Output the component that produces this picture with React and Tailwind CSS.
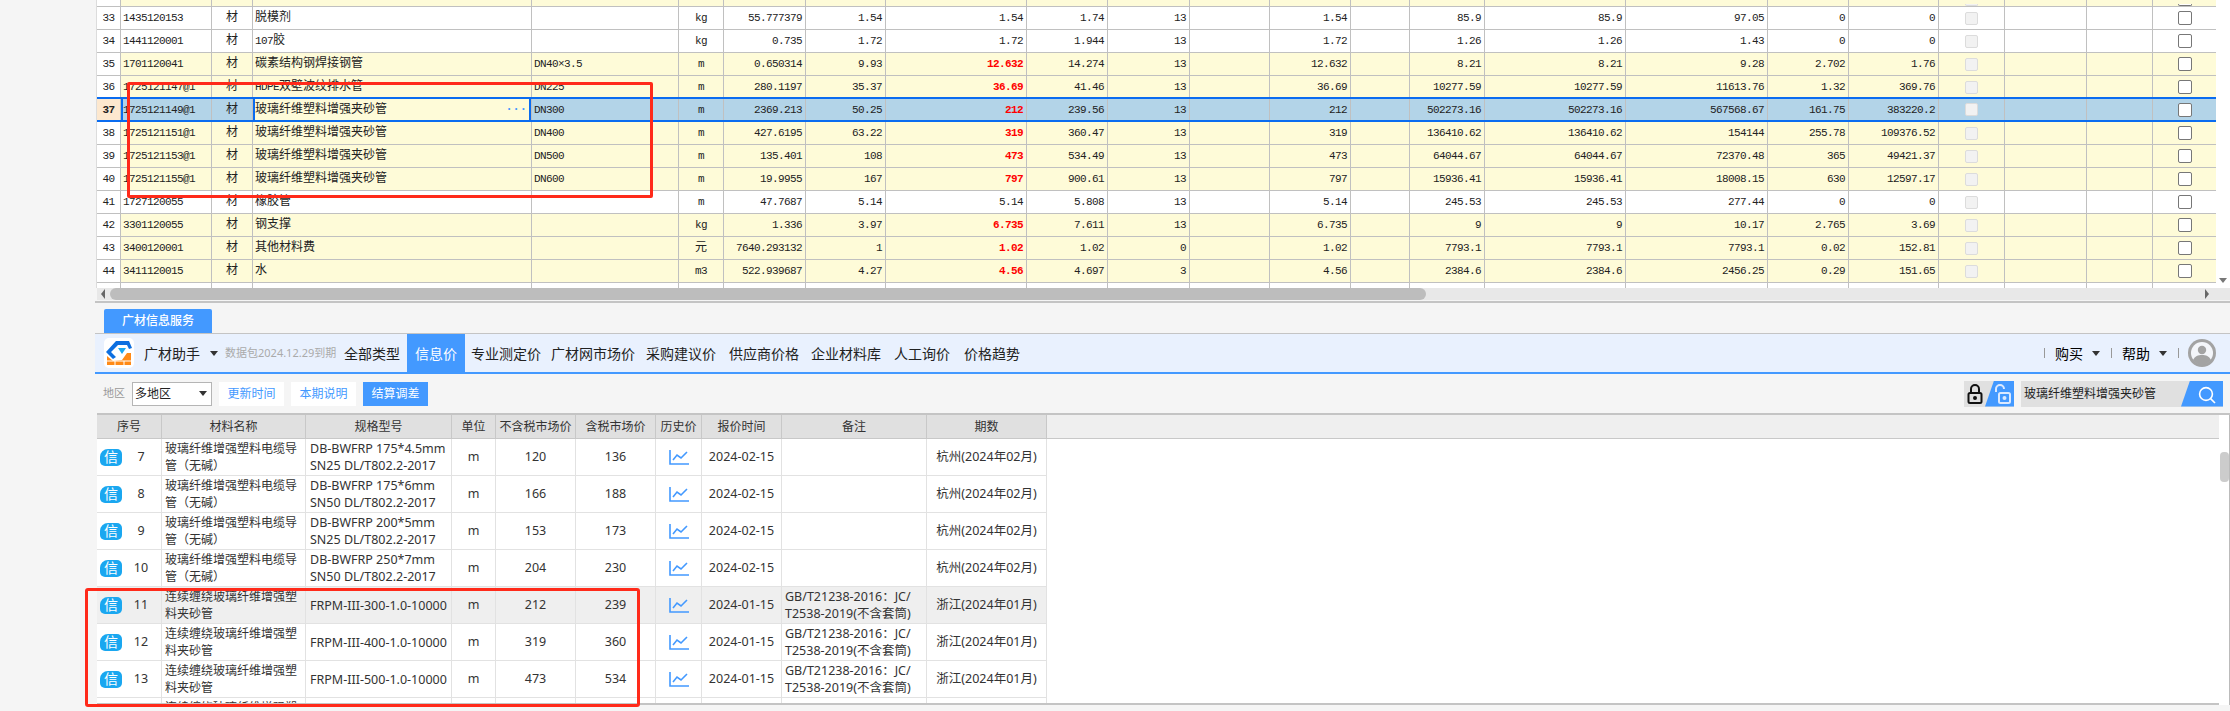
import React from "react";

const gridCols =
  "grid grid-cols-[24px_91px_41px_279px_147px_45px_82px_80px_141px_81px_82px_80px_81px_59px_75px_141px_142px_81px_90px_66px_82px_66px_63px]";

const tableCols =
  "grid grid-cols-[65px_144px_146px_44px_80px_80px_46px_80px_145px_120px]";

const materials = [
  ["33", "1435120153", "脱模剂", "", "kg", "55.777379", "1.54", "1.54", "1.74", "13", "1.54", "85.9", "85.9", "97.05", "0", "0", "w"],
  ["34", "1441120001", "107胶", "", "kg", "0.735", "1.72", "1.72", "1.944", "13", "1.72", "1.26", "1.26", "1.43", "0", "0", "w"],
  ["35", "1701120041", "碳素结构钢焊接钢管", "DN40×3.5", "m", "0.650314", "9.93", "12.632", "14.274", "13", "12.632", "8.21", "8.21", "9.28", "2.702", "1.76", "r"],
  ["36", "1725121147@1", "HDPE双壁波纹排水管", "DN225", "m", "280.1197", "35.37", "36.69", "41.46", "13", "36.69", "10277.59", "10277.59", "11613.76", "1.32", "369.76", "r"],
  ["37", "1725121149@1", "玻璃纤维塑料增强夹砂管", "DN300", "m", "2369.213", "50.25", "212", "239.56", "13", "212", "502273.16", "502273.16", "567568.67", "161.75", "383220.2", "s"],
  ["38", "1725121151@1", "玻璃纤维塑料增强夹砂管", "DN400", "m", "427.6195", "63.22", "319", "360.47", "13", "319", "136410.62", "136410.62", "154144", "255.78", "109376.52", "r"],
  ["39", "1725121153@1", "玻璃纤维塑料增强夹砂管", "DN500", "m", "135.401", "108", "473", "534.49", "13", "473", "64044.67", "64044.67", "72370.48", "365", "49421.37", "r"],
  ["40", "1725121155@1", "玻璃纤维塑料增强夹砂管", "DN600", "m", "19.9955", "167", "797", "900.61", "13", "797", "15936.41", "15936.41", "18008.15", "630", "12597.17", "r"],
  ["41", "1727120055", "橡胶管", "", "m", "47.7687", "5.14", "5.14", "5.808", "13", "5.14", "245.53", "245.53", "277.44", "0", "0", "w"],
  ["42", "3301120055", "钢支撑", "", "kg", "1.336", "3.97", "6.735", "7.611", "13", "6.735", "9", "9", "10.17", "2.765", "3.69", "r"],
  ["43", "3400120001", "其他材料费", "", "元", "7640.293132", "1", "1.02", "1.02", "0", "1.02", "7793.1", "7793.1", "7793.1", "0.02", "152.81", "r"],
  ["44", "3411120015", "水", "", "m3", "522.939687", "4.27", "4.56", "4.697", "3", "4.56", "2384.6", "2384.6", "2456.25", "0.29", "151.65", "r"],
];

const glass = "玻璃纤维增强塑料电缆导管（无碱）";
const frpm = "连续缠绕玻璃纤维增强塑料夹砂管";
const hangzhou = "杭州(2024年02月)";
const zhejiang = "浙江(2024年01月)";
const standard = ["GB/T21238-2016：JC/", "T2538-2019(不含套筒)"];

const prices = [
  [7, glass, ["DB-BWFRP 175*4.5mm", "SN25 DL/T802.2-2017"], "120", "136", "2024-02-15", null, hangzhou],
  [8, glass, ["DB-BWFRP 175*6mm", "SN50 DL/T802.2-2017"], "166", "188", "2024-02-15", null, hangzhou],
  [9, glass, ["DB-BWFRP 200*5mm", "SN25 DL/T802.2-2017"], "153", "173", "2024-02-15", null, hangzhou],
  [10, glass, ["DB-BWFRP 250*7mm", "SN50 DL/T802.2-2017"], "204", "230", "2024-02-15", null, hangzhou],
  [11, frpm, ["FRPM-III-300-1.0-10000"], "212", "239", "2024-01-15", standard, zhejiang],
  [12, frpm, ["FRPM-III-400-1.0-10000"], "319", "360", "2024-01-15", standard, zhejiang],
  [13, frpm, ["FRPM-III-500-1.0-10000"], "473", "534", "2024-01-15", standard, zhejiang],
  [14, frpm, ["FRPM-III-600-1.0-10000"], "797", "900", "2024-01-15", standard, zhejiang],
];

const navItems = [
  ["专业测定价", "ml-[6px] w-[70px]"],
  ["广材网市场价", "ml-[10px] w-[84px]"],
  ["采购建议价", "ml-[11px] w-[70px]"],
  ["供应商价格", "ml-[13px] w-[70px]"],
  ["企业材料库", "ml-[12px] w-[70px]"],
  ["人工询价", "ml-[13px] w-[56px]"],
  ["价格趋势", "ml-[14px] w-[56px]"],
];

// 英文数字用窄等宽字，中文保持 12px
const GridText = ({ text, className = "" }) => (
  <span className={`whitespace-nowrap ${className}`}>
    {text.split(/([\u4e00-\u9fff]+)/).map((part, i) =>
      /[\u4e00-\u9fff]/.test(part) ? (
        <span key={i} className="text-[12px]">
          {part}
        </span>
      ) : (
        <span key={i} className="text-[11px] tracking-[-0.6px]">
          {part}
        </span>
      ),
    )}
  </span>
);

const Caret = ({ className = "" }) => (
  <span
    className={`inline-block w-0 h-0 border-x-[4px] border-x-transparent border-t-[5px] border-t-[#333] ${className}`}
  />
);

const MaterialRow = ({ row }) => {
  const [no, code, name, spec, unit, qty, base, market, tax, rate, settle, sum1, sum2, sum3, diff, diffSum, kind] = row;
  const selected = kind === "s";
  const rowBg = selected ? "bg-[#b3d4e8]" : kind === "r" ? "bg-[#fefbd8]" : "bg-white";
  const cell = "flex items-center h-full border-r border-[#c0c0c0] overflow-hidden";
  const num = `${cell} justify-end pr-[3px]`;
  const red = kind !== "w";

  return (
    <div
      className={`${gridCols} relative w-[2119px] h-[23px] text-[#222] font-['Liberation_Mono','Noto_Sans_CJK_SC',monospace] ${rowBg} ${
        selected ? "border-b-2 border-[#0a6cf0] shadow-[0_-2px_0_#0a6cf0]" : "border-b border-[#c0c0c0]"
      }`}
    >
      <div className={`${cell} justify-center ${selected ? "bg-[#fde8cf] font-bold" : "bg-white"}`}>
        <GridText text={no} />
      </div>
      <div className={`${cell} pl-[2px] ${selected ? "shadow-[inset_2px_0_0_#0a6cf0]" : ""}`}>
        <GridText text={code} />
      </div>
      <div className={`${cell} justify-center`}>
        <GridText text="材" />
      </div>
      <div
        className={`${cell} pl-[2px] justify-between ${
          selected ? "bg-[#fefbd8] shadow-[inset_2px_0_0_#0a6cf0,inset_-2px_0_0_#0a6cf0]" : ""
        }`}
      >
        <GridText text={name} />
        {selected && <span className="pr-[4px] text-[#4399ff] text-[12px] font-bold leading-none">···</span>}
      </div>
      <div className={`${cell} pl-[2px]`}>
        <GridText text={spec} />
      </div>
      <div className={`${cell} justify-center`}>
        <GridText text={unit} />
      </div>
      <div className={num}>
        <GridText text={qty} />
      </div>
      <div className={num}>
        <GridText text={base} />
      </div>
      <div className={num}>
        <GridText text={market} className={red ? "text-[#ff0000] font-bold" : ""} />
      </div>
      <div className={num}>
        <GridText text={tax} />
      </div>
      <div className={num}>
        <GridText text={rate} />
      </div>
      <div className={cell} />
      <div className={num}>
        <GridText text={settle} />
      </div>
      <div className={cell} />
      <div className={num}>
        <GridText text={sum1} />
      </div>
      <div className={num}>
        <GridText text={sum2} />
      </div>
      <div className={num}>
        <GridText text={sum3} />
      </div>
      <div className={num}>
        <GridText text={diff} />
      </div>
      <div className={num}>
        <GridText text={diffSum} />
      </div>
      <div className={`${cell} justify-center`}>
        <span className="block w-[13px] h-[13px] rounded-[2px] border border-[#dcdcdc] bg-[#f2f2f2]" />
      </div>
      <div className={cell} />
      <div className={cell} />
      <div className="flex items-center justify-center h-full">
        <span className="block w-[14px] h-[14px] rounded-[2px] border border-[#777] bg-white" />
      </div>
    </div>
  );
};

// 表格上下被裁掉的半行
const BlankRow = ({ height, bg, peek }) => (
  <div className={`${gridCols} w-[2119px] ${height} ${bg} overflow-hidden`}>
    {Array.from({ length: 23 }).map((_, i) => (
      <div
        key={i}
        className={`flex justify-center ${i === 22 ? "" : "border-r border-[#c0c0c0]"} ${i === 0 ? "bg-white" : ""}`}
      >
        {peek && i === 19 && (
          <span className="block self-end w-[13px] h-[2px] rounded-b-[2px] border-x border-b border-[#dcdcdc] bg-[#f2f2f2]" />
        )}
        {peek && i === 22 && (
          <span className="block self-end w-[14px] h-[2px] rounded-b-[2px] border-x border-b border-[#777] bg-white" />
        )}
      </div>
    ))}
  </div>
);

const Logo = () => (
  <svg width="30" height="30" viewBox="0 0 30 30" className="shrink-0">
    <rect width="30" height="30" rx="5" fill="#fff" />
    <path d="M12 3h13l3 7-3 1-2-4H14l-7 7 5 5-3 2-7-7z" fill="#0d6fe0" />
    <path d="M14 10l8 0-4 6z" fill="#1aa7f0" />
    <path d="M3 18l6 5 9-1 5-7 4 0v12H3z" fill="#ff8a17" />
    <path d="M3 23h24M11 23v5M20 23v5" stroke="#fff" strokeWidth="1" fill="none" />
  </svg>
);

const ChartIcon = () => (
  <svg width="20" height="15" viewBox="0 0 20 15" fill="none" stroke="#4399ff" strokeWidth="1.6">
    <path d="M1 0v14h19" />
    <path d="M4 10l4-5 4 3 6-6" />
  </svg>
);

const LockIcon = ({ open, color }) => (
  <svg width="16" height="20" viewBox="0 0 16 20" fill="none" stroke={color} strokeWidth="2">
    <path d={open ? "M1 8V5a4 4 0 0 1 8 0" : "M4 9V5a4 4 0 0 1 8 0v4"} />
    <rect x={open ? 4 : 1.5} y="9" width={open ? 11 : 13} height="10" rx="1.5" />
    <circle cx={open ? 9.5 : 8} cy="14" r="1" fill={color} />
  </svg>
);

const Avatar = () => (
  <svg width="28" height="28" viewBox="0 0 28 28" className="shrink-0">
    <circle cx="14" cy="14" r="14" fill="#a3a3a3" />
    <circle cx="14" cy="14" r="11" fill="#f4f6fa" />
    <circle cx="14" cy="11" r="4.2" fill="#a3a3a3" />
    <path d="M5 21c2-4 5-5 9-5s7 1 9 5a11 11 0 0 1-18 0z" fill="#a3a3a3" />
  </svg>
);

const PriceRow = ({ row }) => {
  const [no, name, spec, exTax, incTax, date, remark, period] = row;
  const cell = "flex items-center h-full border-r border-[#e2e2e2]";
  return (
    <div
      className={`${tableCols} w-[950px] h-[37px] shrink-0 border-b border-[#e2e2e2] text-[12.5px] ${
        no === 11 ? "bg-[#efefef]" : "bg-white"
      }`}
    >
      <div className={`${cell} pl-[3px]`}>
        <span className="flex items-center justify-center w-[22px] h-[17px] rounded-tl-[8px] rounded-bl-[5px] rounded-r-[5px] bg-[#1aa7f0] text-white text-[14px] leading-none">
          信
        </span>
        <span className="w-[38px] text-center">{no}</span>
      </div>
      <div className={`${cell} pl-[3px] pr-[6px] text-[12px] leading-[17px]`}>{name}</div>
      <div className={`${cell} pl-[4px] leading-[17px] whitespace-nowrap`}>
        <div>
          {spec.map((line) => (
            <div key={line}>{line}</div>
          ))}
        </div>
      </div>
      <div className={`${cell} justify-center`}>m</div>
      <div className={`${cell} justify-center`}>{exTax}</div>
      <div className={`${cell} justify-center`}>{incTax}</div>
      <div className={`${cell} justify-center`}>
        <ChartIcon />
      </div>
      <div className={`${cell} justify-center`}>{date}</div>
      <div className={`${cell} pl-[3px] leading-[17px] whitespace-nowrap`}>
        {remark && (
          <div>
            {remark.map((line) => (
              <div key={line}>{line}</div>
            ))}
          </div>
        )}
      </div>
      <div className={`${cell} justify-center whitespace-nowrap`}>{period}</div>
    </div>
  );
};

const App = () => {
  return (
    <div className="relative w-[2230px] h-[711px] overflow-hidden bg-[#f5f5f5] text-[12px] text-[#333] font-['Noto_Sans','Noto_Sans_CJK_SC',sans-serif]">
      {/* 上方材料表 */}
      <div className="flex h-[288px]">
        <div className="w-[97px] shrink-0 border-r border-[#dcdcdc]" />
        <div className="flex flex-col w-[2119px] shrink-0">
          <BlankRow height="h-[6px]" bg="bg-[#fefbd8]" peek />
          <div className="h-px bg-[#c0c0c0]" />
          {materials.map((row) => (
            <MaterialRow key={row[0]} row={row} />
          ))}
          <BlankRow height="h-[5px]" bg="bg-white" />
        </div>
        <div className="relative flex-1 bg-white">
          <span className="absolute left-[3px] top-[278px] w-0 h-0 border-x-[4px] border-x-transparent border-t-[5px] border-t-[#777]" />
        </div>
      </div>

      {/* 横向滚动条 */}
      <div className="flex items-center h-[12px] ml-[97px] bg-[#e8e8e8]">
        <span className="ml-[4px] w-0 h-0 border-y-[5px] border-y-transparent border-r-[4px] border-r-[#666]" />
        <span className="ml-[5px] w-[1316px] h-[12px] rounded-[6px] bg-[#bdbdbd]" />
        <span className="ml-[779px] w-0 h-0 border-y-[5px] border-y-transparent border-l-[4px] border-l-[#666]" />
      </div>
      <div className="h-[3px] ml-[95px] border-b-2 border-[#c4c4c4]" />

      {/* 广材信息服务 */}
      <div className="ml-[95px] pl-[9px] pt-[6px] h-[30px]">
        <div className="flex items-center justify-center w-[108px] h-[24px] bg-[#4399ff] text-white text-[12px] font-medium rounded-t-[2px]">
          广材信息服务
        </div>
      </div>
      <div className="flex items-center ml-[95px] h-[41px] bg-[#e9f1fe] border-t border-[#c4c4c4] border-b-2 border-b-[#4399ff] text-[14px] text-[#222]">
        <div className="ml-[9px]">
          <Logo />
        </div>
        <span className="ml-[10px] w-[56px]">广材助手</span>
        <Caret className="ml-[10px]" />
        <span className="ml-[7px] w-[102px] text-[11px] text-[#aaaaaa] whitespace-nowrap">数据包2024.12.29到期</span>
        <span className="ml-[17px] w-[56px]">全部类型</span>
        <span className="flex items-center justify-center ml-[7px] w-[58px] h-full bg-[#4399ff] text-white">信息价</span>
        {navItems.map(([label, size]) => (
          <span key={label} className={`${size} whitespace-nowrap`}>
            {label}
          </span>
        ))}
        <div className="flex items-center ml-auto pr-[14px]">
          <span className="w-px h-[10px] bg-[#999]" />
          <span className="ml-[10px] w-[28px] text-black">购买</span>
          <Caret className="ml-[9px]" />
          <span className="ml-[11px] w-px h-[10px] bg-[#999]" />
          <span className="ml-[10px] w-[28px] text-black">帮助</span>
          <Caret className="ml-[9px]" />
          <span className="ml-[11px] mr-[9px] w-px h-[10px] bg-[#999]" />
          <Avatar />
        </div>
      </div>

      {/* 工具条 */}
      <div className="flex items-center ml-[95px] h-[39px] pl-[8px] pr-[7px]">
        <span className="w-[22px] text-[11px] text-[#999]">地区</span>
        <div className="flex items-center justify-between ml-[7px] w-[80px] h-[24px] bg-white border border-[#b5b5b5] pl-[2px] pr-[4px] text-[12px] text-[#222]">
          多地区
          <Caret />
        </div>
        <span className="flex items-center justify-center ml-[7px] w-[65px] h-[24px] bg-white text-[#4399ff]">更新时间</span>
        <span className="flex items-center justify-center ml-[7px] w-[65px] h-[24px] bg-white text-[#4399ff]">本期说明</span>
        <span className="flex items-center justify-center ml-[7px] w-[65px] h-[24px] bg-[#4399ff] text-white">结算调差</span>
        <div className="flex items-center ml-auto h-[26px]">
          <div className="relative flex w-[50px] h-full bg-[#e0e0e0] overflow-hidden">
            <span className="absolute left-[3px] top-[3px]">
              <LockIcon color="#111" />
            </span>
            <span className="absolute right-0 top-0 h-full w-[29px] bg-[#4399ff] [clip-path:polygon(9px_0,100%_0,100%_100%,0_100%)]" />
            <span className="absolute left-[31px] top-[3px]">
              <LockIcon open color="#dbe9ff" />
            </span>
          </div>
          <div className="relative flex items-center ml-[7px] w-[202px] h-full bg-[#e0e0e0] pl-[3px] overflow-hidden text-[#222]">
            玻璃纤维塑料增强夹砂管
            <span className="absolute right-0 top-0 h-full w-[42px] bg-[#4399ff] [clip-path:polygon(9px_0,100%_0,100%_100%,0_100%)]" />
            <svg
              className="absolute right-[7px] top-[5px]"
              width="18"
              height="18"
              viewBox="0 0 18 18"
              fill="none"
              stroke="#fff"
              strokeWidth="1.6"
            >
              <circle cx="8" cy="8" r="6.4" />
              <path d="M12.6 12.6L17 17" />
            </svg>
          </div>
        </div>
      </div>

      {/* 信息价表 */}
      <div className="relative ml-[97px] h-[292px] border-t-2 border-[#c4c4c4] flex">
        <div className="flex flex-col flex-1 h-[290px] bg-white border-b-2 border-[#c4c4c4] overflow-hidden">
          <div className="h-[24px] shrink-0 bg-[#efefef] border-b border-[#c8c8c8]">
            <div className={`${tableCols} w-[950px] h-full bg-[#e0e0e0]`}>
              {["序号", "材料名称", "规格型号", "单位", "不含税市场价", "含税市场价", "历史价", "报价时间", "备注", "期数"].map((title) => (
                <div key={title} className="flex items-center justify-center border-r border-[#c8c8c8] whitespace-nowrap">
                  {title}
                </div>
              ))}
            </div>
          </div>
          {prices.map((row) => (
            <PriceRow key={row[0]} row={row} />
          ))}
        </div>
        <div className="relative w-[11px] shrink-0 h-[290px] bg-white border-r border-[#bbb]">
          <span className="absolute left-[1px] top-[37px] w-[9px] h-[30px] rounded-[4px] bg-[#cccccc]" />
        </div>
      </div>

      {/* 红框标注 */}
      <div className="absolute left-[127px] top-[82px] w-[526px] h-[116px] border-[3px] border-[#ff2a1a] rounded-[2px]" />
      <div className="absolute left-[85px] top-[588px] w-[555px] h-[119px] border-[3px] border-[#ff2a1a] rounded-[3px]" />
    </div>
  );
};

export default App;
